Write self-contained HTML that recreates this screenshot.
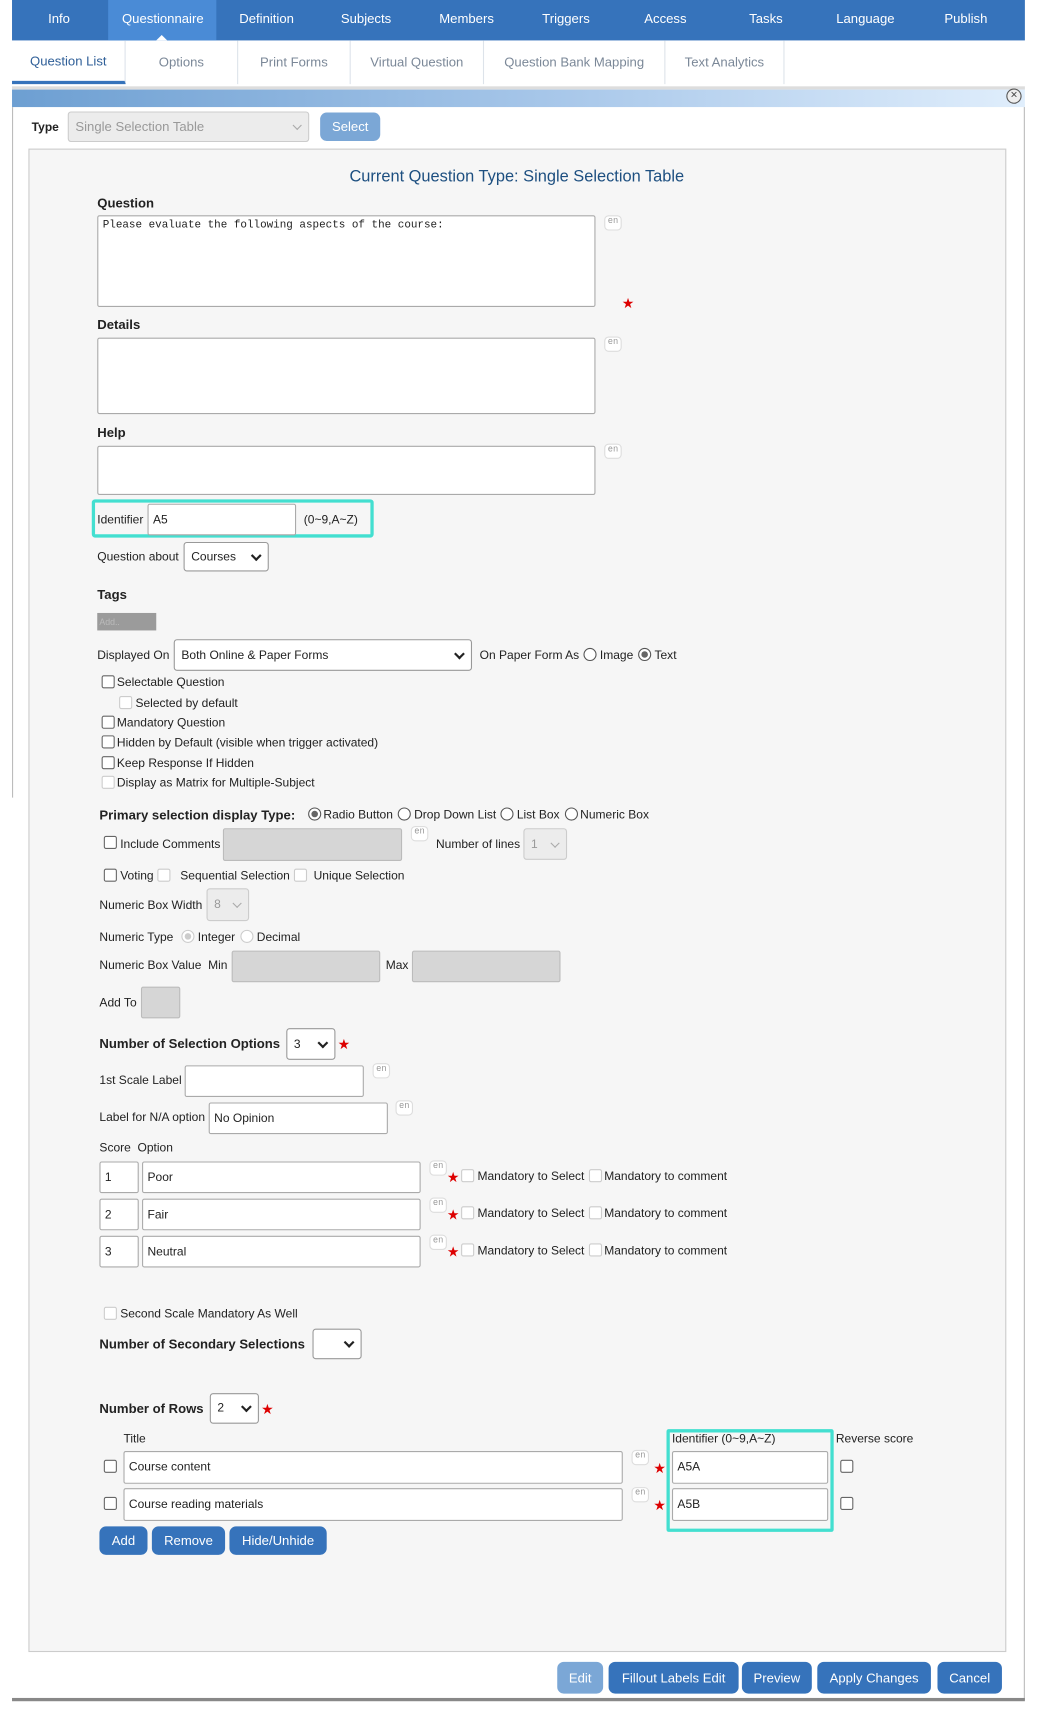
<!DOCTYPE html>
<html><head><meta charset="utf-8"><style>
*{box-sizing:border-box;margin:0;padding:0}
html,body{width:1038px;height:1715px;overflow:hidden;background:#fff}
#w{position:absolute;left:0;top:0;width:950px;height:1570px;transform:scale(1.09263);transform-origin:0 0;font-family:"Liberation Sans",Arial,sans-serif;font-size:11px;color:#222}
.a{position:absolute;white-space:nowrap}
.t{position:absolute;white-space:nowrap;line-height:14px;transform:translateY(-7px)}
.b{font-weight:bold;font-size:12px}
.in{position:absolute;background:#fff;border:1px solid #aaa;border-radius:2px;padding-left:4px;display:flex;align-items:center}
.dis{background:#d6d6d6;border-color:#bbb}
.sel{position:absolute;background:#fff;border:1px solid #999;border-radius:3px;padding-left:6px;display:flex;align-items:center}
.sel::after{content:"";position:absolute;right:7px;top:50%;width:5px;height:5px;border-right:2px solid #222;border-bottom:2px solid #222;transform:translateY(-70%) rotate(45deg)}
.sel.d{background:#ececec;border-color:#ccc;color:#999}
.sel.d::after{border-color:#aaa;border-width:1.5px}
.cb{position:absolute;width:12px;height:12px;border:1px solid #666;border-radius:2px;background:#fff}
.cb.d{border-color:#ccc}
.rd{position:absolute;width:12px;height:12px;border:1px solid #555;border-radius:50%;background:#fff}
.rd.on::after{content:"";position:absolute;left:2px;top:2px;width:6px;height:6px;border-radius:50%;background:#666}
.rd.d{border-color:#ccc}
.rd.d.on::after{background:#ccc}
.en{position:absolute;width:16px;height:14px;border:1px solid #ddd;border-radius:4px;background:#fff;font-size:8px;color:#999;text-align:center;line-height:10px;font-family:"Liberation Mono",monospace}
.st{position:absolute;color:#d00;font-size:13px;line-height:13px}
.btn{position:absolute;background:#3673bb;color:#fff;border-radius:6px;font-size:12px;display:flex;align-items:center;justify-content:center}
.ta{position:absolute;background:#fff;border:1px solid #aaa;border-radius:2px}
.nav{position:absolute;top:17px;transform:translate(-50%,-50%);color:#fff;font-size:12px}
.sub{position:absolute;top:37px;height:40px;border-right:1px solid #dde3ea;color:#7b8898;font-size:12px;display:flex;align-items:center;justify-content:center}
</style></head><body><div id="w">
<div class="a" style="left:11px;top:0;width:927px;height:37px;background:#3673bb"></div>
<div class="a" style="left:99px;top:0;width:99px;height:37px;background:#4a8bd6"></div>
<div class="a" style="left:143px;top:32px;width:0;height:0;border-left:5px solid transparent;border-right:5px solid transparent;border-bottom:5px solid #fff"></div>
<div class="nav" style="left:54px">Info</div>
<div class="nav" style="left:149px">Questionnaire</div>
<div class="nav" style="left:244px">Definition</div>
<div class="nav" style="left:335px">Subjects</div>
<div class="nav" style="left:427px">Members</div>
<div class="nav" style="left:518px">Triggers</div>
<div class="nav" style="left:609px">Access</div>
<div class="nav" style="left:701px">Tasks</div>
<div class="nav" style="left:792px">Language</div>
<div class="nav" style="left:884px">Publish</div>
<div class="sub" style="left:11px;width:104px;color:#2f5f98;border-bottom:3px solid #3673bb">Question List</div>
<div class="sub" style="left:115px;width:103px">Options</div>
<div class="sub" style="left:218px;width:103px">Print Forms</div>
<div class="sub" style="left:321px;width:122px">Virtual Question</div>
<div class="sub" style="left:443px;width:166px">Question Bank Mapping</div>
<div class="sub" style="left:609px;width:109px">Text Analytics</div>
<div class="a" style="left:11px;top:79px;width:927px;height:3px;background:#ddd"></div>
<div class="a" style="left:11px;top:82px;width:927px;height:16px;background:linear-gradient(90deg,#6d9fd2,#a9c8ea 55%,#e0eefc)"></div>
<div class="a" style="left:921px;top:81px;width:14px;height:14px;border:1.5px solid #555;border-radius:50%;background:#eee;font-size:11px;line-height:10px;text-align:center;color:#444">×</div>
<div class="a" style="left:11px;top:98px;width:1px;height:632px;background:#bbb"></div>
<div class="a" style="left:937px;top:98px;width:1px;height:1458px;background:#bbb"></div>
<div class="a" style="left:11px;top:1554px;width:927px;height:3px;background:#888"></div>
<div class="t" style="left:29px;top:117px;font-weight:bold">Type</div>
<div class="sel d" style="left:62px;top:102px;width:221px;height:28px;color:#999;font-size:12px">Single Selection Table</div>
<div class="btn" style="left:293px;top:103px;width:55px;height:26px;background:#7ba7d6">Select</div>
<div class="a" style="left:26px;top:136px;width:895px;height:1376px;background:#f6f6f6;border:1px solid #ccc"></div>
<div class="t" style="left:473px;top:162px;transform:translate(-50%,-50%);font-size:15px;color:#1d4f80">Current Question Type: Single Selection Table</div>
<div class="t b" style="left:89px;top:186px">Question</div>
<div class="ta" style="left:89px;top:197px;width:456px;height:84px;font-family:'Liberation Mono',monospace;font-size:10px;padding:3px 4px">Please evaluate the following aspects of the course:</div>
<div class="en" style="left:553px;top:197px">en</div>
<div class="st" style="left:569px;top:271px">★</div>
<div class="t b" style="left:89px;top:297px">Details</div>
<div class="ta" style="left:89px;top:309px;width:456px;height:70px"></div>
<div class="en" style="left:553px;top:308px">en</div>
<div class="t b" style="left:89px;top:396px">Help</div>
<div class="ta" style="left:89px;top:408px;width:456px;height:45px"></div>
<div class="en" style="left:553px;top:406px">en</div>
<div class="a" style="left:84px;top:457px;width:258px;height:35px;border:3px solid #43dfd0;border-radius:3px"></div>
<div class="t" style="left:89px;top:476px">Identifier</div>
<div class="in" style="left:135px;top:461px;width:136px;height:29px">A5</div>
<div class="t" style="left:278px;top:476px">(0~9,A~Z)</div>
<div class="t" style="left:89px;top:510px">Question about</div>
<div class="sel" style="left:168px;top:496px;width:78px;height:27px">Courses</div>
<div class="t b" style="left:89px;top:544px">Tags</div>
<div class="a" style="left:89px;top:561px;width:54px;height:16px;background:#9b9b9b;color:#bbb;font-size:8px;padding:4px 2px">Add..</div>
<div class="t" style="left:89px;top:600px">Displayed On</div>
<div class="sel" style="left:159px;top:585px;width:273px;height:29px">Both Online &amp; Paper Forms</div>
<div class="t" style="left:439px;top:600px">On Paper Form As</div>
<div class="rd" style="left:534px;top:593px"></div><div class="t" style="left:549px;top:600px">Image</div>
<div class="rd on" style="left:584px;top:593px"></div><div class="t" style="left:599px;top:600px">Text</div>
<div class="cb" style="left:93px;top:618px"></div><div class="t" style="left:107px;top:625px">Selectable Question</div>
<div class="cb d" style="left:109px;top:637px"></div><div class="t" style="left:124px;top:644px">Selected by default</div>
<div class="cb" style="left:93px;top:655px"></div><div class="t" style="left:107px;top:662px">Mandatory Question</div>
<div class="cb" style="left:93px;top:673px"></div><div class="t" style="left:107px;top:680px">Hidden by Default (visible when trigger activated)</div>
<div class="cb" style="left:93px;top:692px"></div><div class="t" style="left:107px;top:699px">Keep Response If Hidden</div>
<div class="cb d" style="left:93px;top:710px"></div><div class="t" style="left:107px;top:717px">Display as Matrix for Multiple-Subject</div>
<div class="t b" style="left:91px;top:746px">Primary selection display Type:</div>
<div class="rd on" style="left:282px;top:739px"></div><div class="t" style="left:296px;top:746px">Radio Button</div>
<div class="rd" style="left:364px;top:739px"></div><div class="t" style="left:379px;top:746px">Drop Down List</div>
<div class="rd" style="left:458px;top:739px"></div><div class="t" style="left:473px;top:746px">List Box</div>
<div class="rd" style="left:517px;top:739px"></div><div class="t" style="left:531px;top:746px">Numeric Box</div>
<div class="cb" style="left:95px;top:765px"></div><div class="t" style="left:110px;top:773px">Include Comments</div>
<div class="in dis" style="left:204px;top:758px;width:164px;height:30px"></div>
<div class="en" style="left:376px;top:756px">en</div>
<div class="t" style="left:399px;top:773px">Number of lines</div>
<div class="sel d" style="left:479px;top:758px;width:40px;height:29px">1</div>
<div class="cb" style="left:95px;top:795px"></div><div class="t" style="left:110px;top:802px">Voting</div>
<div class="cb d" style="left:144px;top:795px"></div><div class="t" style="left:165px;top:802px">Sequential Selection</div>
<div class="cb d" style="left:269px;top:795px"></div><div class="t" style="left:287px;top:802px">Unique Selection</div>
<div class="t" style="left:91px;top:829px">Numeric Box Width</div>
<div class="sel d" style="left:189px;top:813px;width:39px;height:30px">8</div>
<div class="t" style="left:91px;top:858px">Numeric Type</div>
<div class="rd d on" style="left:166px;top:851px"></div><div class="t" style="left:181px;top:858px">Integer</div>
<div class="rd d" style="left:220px;top:851px"></div><div class="t" style="left:235px;top:858px">Decimal</div>
<div class="t" style="left:91px;top:884px">Numeric Box Value &nbsp;Min</div>
<div class="in dis" style="left:212px;top:870px;width:136px;height:29px"></div>
<div class="t" style="left:353px;top:884px">Max</div>
<div class="in dis" style="left:377px;top:870px;width:136px;height:29px"></div>
<div class="t" style="left:91px;top:918px">Add To</div>
<div class="in dis" style="left:129px;top:903px;width:36px;height:29px"></div>
<div class="t b" style="left:91px;top:955px">Number of Selection Options</div>
<div class="sel" style="left:262px;top:941px;width:45px;height:29px">3</div>
<div class="st" style="left:309px;top:949px">★</div>
<div class="t" style="left:91px;top:989px">1st Scale Label</div>
<div class="in" style="left:169px;top:975px;width:164px;height:29px"></div>
<div class="en" style="left:341px;top:973px">en</div>
<div class="t" style="left:91px;top:1023px">Label for N/A option</div>
<div class="in" style="left:191px;top:1009px;width:164px;height:29px">No Opinion</div>
<div class="en" style="left:362px;top:1007px">en</div>
<div class="t" style="left:91px;top:1051px">Score &nbsp;Option</div>

<div class="in" style="left:91px;top:1063px;width:36px;height:29px">1</div>
<div class="in" style="left:130px;top:1063px;width:255px;height:29px">Poor</div>
<div class="en" style="left:393px;top:1062px">en</div><div class="st" style="left:409px;top:1071px">★</div>
<div class="cb d" style="left:422px;top:1070px"></div><div class="t" style="left:437px;top:1077px">Mandatory to Select</div>
<div class="cb d" style="left:539px;top:1070px"></div><div class="t" style="left:553px;top:1077px">Mandatory to comment</div>

<div class="in" style="left:91px;top:1097px;width:36px;height:29px">2</div>
<div class="in" style="left:130px;top:1097px;width:255px;height:29px">Fair</div>
<div class="en" style="left:393px;top:1096px">en</div><div class="st" style="left:409px;top:1105px">★</div>
<div class="cb d" style="left:422px;top:1104px"></div><div class="t" style="left:437px;top:1111px">Mandatory to Select</div>
<div class="cb d" style="left:539px;top:1104px"></div><div class="t" style="left:553px;top:1111px">Mandatory to comment</div>

<div class="in" style="left:91px;top:1131px;width:36px;height:29px">3</div>
<div class="in" style="left:130px;top:1131px;width:255px;height:29px">Neutral</div>
<div class="en" style="left:393px;top:1130px">en</div><div class="st" style="left:409px;top:1139px">★</div>
<div class="cb d" style="left:422px;top:1138px"></div><div class="t" style="left:437px;top:1145px">Mandatory to Select</div>
<div class="cb d" style="left:539px;top:1138px"></div><div class="t" style="left:553px;top:1145px">Mandatory to comment</div>

<div class="cb d" style="left:95px;top:1196px"></div><div class="t" style="left:110px;top:1203px">Second Scale Mandatory As Well</div>
<div class="t b" style="left:91px;top:1230px">Number of Secondary Selections</div>
<div class="sel" style="left:286px;top:1216px;width:45px;height:28px"></div>
<div class="t b" style="left:91px;top:1289px">Number of Rows</div>
<div class="sel" style="left:192px;top:1275px;width:45px;height:28px">2</div>
<div class="st" style="left:239px;top:1283px">★</div>
<div class="a" style="left:610px;top:1308px;width:153px;height:94px;border:3px solid #43dfd0;border-radius:2px"></div>
<div class="t" style="left:113px;top:1317px">Title</div>
<div class="t" style="left:615px;top:1317px">Identifier (0~9,A~Z)</div>
<div class="t" style="left:765px;top:1317px">Reverse score</div>
<div class="cb" style="left:95px;top:1336px"></div>
<div class="in" style="left:113px;top:1328px;width:457px;height:30px">Course content</div>
<div class="en" style="left:578px;top:1327px">en</div><div class="st" style="left:598px;top:1337px">★</div>
<div class="in" style="left:615px;top:1328px;width:143px;height:30px">A5A</div>
<div class="cb" style="left:769px;top:1336px"></div>
<div class="cb" style="left:95px;top:1370px"></div>
<div class="in" style="left:113px;top:1362px;width:457px;height:30px">Course reading materials</div>
<div class="en" style="left:578px;top:1361px">en</div><div class="st" style="left:598px;top:1371px">★</div>
<div class="in" style="left:615px;top:1362px;width:143px;height:30px">A5B</div>
<div class="cb" style="left:769px;top:1370px"></div>
<div class="btn" style="left:91px;top:1397px;width:44px;height:26px">Add</div>
<div class="btn" style="left:139px;top:1397px;width:67px;height:26px">Remove</div>
<div class="btn" style="left:210px;top:1397px;width:89px;height:26px">Hide/Unhide</div>
<div class="btn" style="left:510px;top:1521px;width:42px;height:29px;background:#7ba7d6">Edit</div>
<div class="btn" style="left:557px;top:1521px;width:119px;height:29px">Fillout Labels Edit</div>
<div class="btn" style="left:679px;top:1521px;width:64px;height:29px">Preview</div>
<div class="btn" style="left:748px;top:1521px;width:104px;height:29px">Apply Changes</div>
<div class="btn" style="left:858px;top:1521px;width:59px;height:29px">Cancel</div>
</div></body></html>
